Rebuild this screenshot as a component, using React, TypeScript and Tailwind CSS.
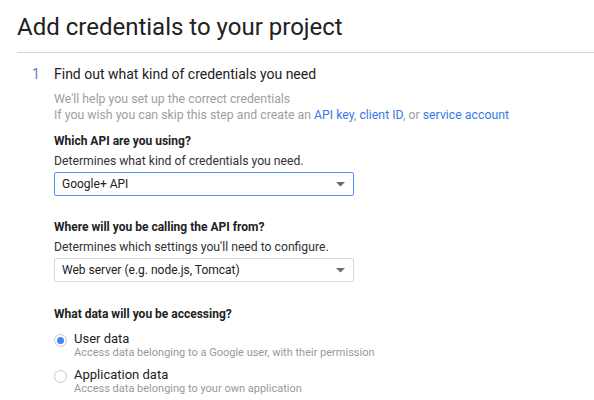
import React from 'react';

const Select: React.FC<{ value: string; focused?: boolean }> = ({ value, focused }) => (
  <div
    className={`flex h-[24px] w-[300px] items-center justify-between rounded-[2px] border bg-white pl-[7px] pr-[8px] text-[12px] text-[#222] ${
      focused ? 'border-[#4d90fe]' : 'border-[#d9d9d9]'
    }`}
  >
    <span>{value}</span>
    <svg width="9" height="5" viewBox="0 0 9 5">
      <path d="M0 0h9L4.5 4.5z" fill="#6b6b6b" />
    </svg>
  </div>
);

const Radio: React.FC<{ checked?: boolean; label: string; desc: string }> = ({ checked, label, desc }) => (
  <div className="flex">
    <div className="mt-[3px] flex h-[13px] w-[13px] items-center justify-center rounded-full border border-[#c6c6c6] bg-white">
      {checked && <div className="h-[7px] w-[7px] rounded-full bg-[#4285f4]" />}
    </div>
    <div className="ml-[7px]">
      <div className="text-[13px] leading-[15px] text-[#222]">{label}</div>
      <div className="text-[11px] leading-[14px] text-[#999]">{desc}</div>
    </div>
  </div>
);

const App: React.FC = () => {
  return (
    <div className="h-[400px] w-[594px] overflow-hidden bg-white font-['Roboto',sans-serif]">
      <h1 className="pl-[17px] pt-[12px] text-[24px] font-normal leading-[30px] text-[#212121]">
        Add credentials to your project
      </h1>
      <div className="ml-[17px] mt-[10px] h-px bg-[#d6d6d6]" />

      <div className="mt-[11px] flex">
        <div className="w-[37px] pl-[32px] text-[14px] leading-[20px] text-[#5a80c8]">1</div>
        <div className="ml-[17px] flex-1">
          <div className="text-[14px] leading-[20px] text-[#222]">Find out what kind of credentials you need</div>

          <div className="mt-[7px] text-[12.3px] leading-[16px] text-[#9e9e9e]">
            <div>We'll help you set up the correct credentials</div>
            <div>
              If you wish you can skip this step and create an{' '}
              <span className="text-[#3b78e7]">API key</span>,{' '}
              <span className="text-[#3b78e7]">client ID</span>, or{' '}
              <span className="text-[#3b78e7]">service account</span>
            </div>
          </div>

          <div className="mt-[10px] text-[12px] font-bold leading-[16px] text-[#222]">Which API are you using?</div>
          <div className="mt-[4px] text-[12.2px] leading-[16px] text-[#333]">Determines what kind of credentials you need.</div>
          <div className="mt-[3px]">
            <Select value="Google+ API" focused />
          </div>

          <div className="mt-[23px] text-[12px] font-bold leading-[16px] text-[#222]">
            Where will you be calling the API from?
          </div>
          <div className="mt-[4px] text-[12.2px] leading-[16px] text-[#333]">
            Determines which settings you'll need to configure.
          </div>
          <div className="mt-[3px]">
            <Select value="Web server (e.g. node.js, Tomcat)" />
          </div>

          <div className="mt-[24px] text-[12px] font-bold leading-[16px] text-[#222]">What data will you be accessing?</div>
          <div className="mt-[9px] flex flex-col gap-[7px]">
            <Radio checked label="User data" desc="Access data belonging to a Google user, with their permission" />
            <Radio label="Application data" desc="Access data belonging to your own application" />
          </div>
        </div>
      </div>
    </div>
  );
};

export default App;
